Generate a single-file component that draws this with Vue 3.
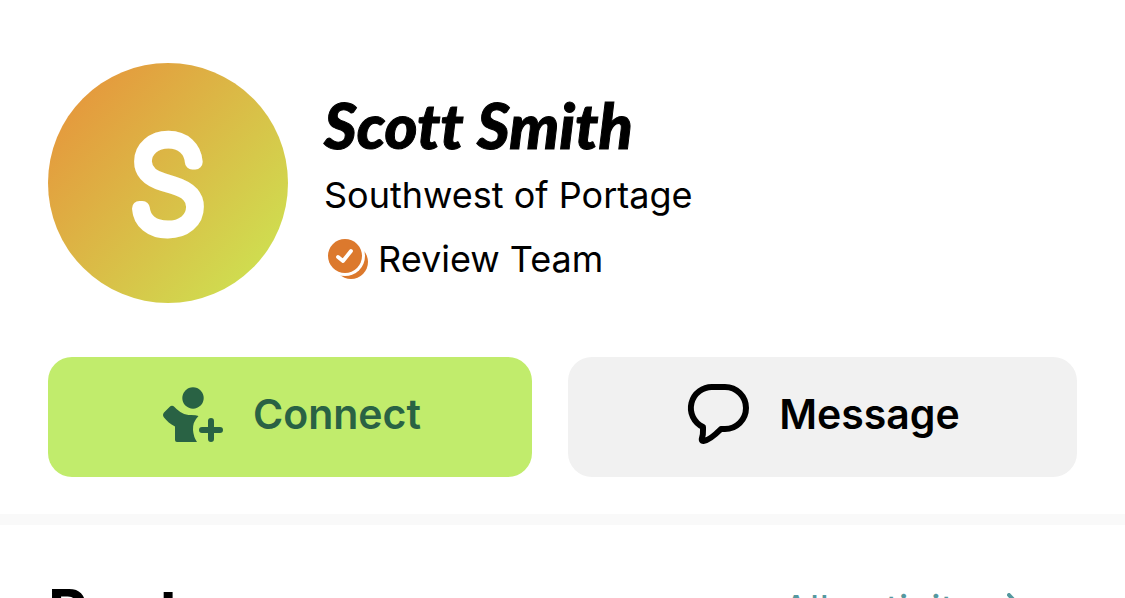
<template>
  <div class="page">
    <section class="profile">
      <div class="summary">
        <svg class="avatar" viewBox="0 0 240 240" role="img" :aria-label="user.name">
          <defs>
            <linearGradient id="avatar-fill" x1="0.1" y1="0.15" x2="0.9" y2="0.85">
              <stop offset="0" stop-color="#e5993d" />
              <stop offset="1" stop-color="#cfde50" />
            </linearGradient>
          </defs>
          <circle cx="120" cy="120" r="120" fill="url(#avatar-fill)" />
          <text class="initial" x="120" y="167" text-anchor="middle">{{ initial }}</text>
        </svg>
        <div class="details">
          <h1 class="name">{{ user.name }}</h1>
          <p class="line">{{ user.area }}</p>
          <p class="line role">
            <svg class="badge" viewBox="0 0 42 42" aria-hidden="true">
              <circle cx="24" cy="24" r="17" fill="#dc792d" />
              <circle cx="18" cy="18" r="20" fill="#fff" />
              <circle cx="18" cy="18" r="17" fill="#dc792d" />
              <path
                d="M11 19l5 4 8-10"
                fill="none"
                stroke="#fff"
                stroke-width="3.8"
                stroke-linecap="round"
                stroke-linejoin="round"
              />
            </svg>
            <span>{{ user.role }}</span>
          </p>
        </div>
      </div>

      <div class="actions">
        <button type="button" class="btn connect" @click="connected = !connected">
          <svg class="icon" viewBox="0 0 60 60" aria-hidden="true">
            <circle cx="30" cy="14" r="10.7" fill="currentColor" />
            <path
              d="M6.5 23Q9 20.500 11.500 23C17 28.500 21 31 28 31Q33 31 35.500 32Q29.500 38 30 46Q30.500 53 34 58H14Q12 58 12 56V42.500C7 40 4 37 1 33.500Q-1 31 1 28.500Z"
              fill="currentColor"
            />
            <path
              d="M48 37V55M39 46H57"
              fill="none"
              stroke="currentColor"
              stroke-width="6"
              stroke-linecap="round"
            />
          </svg>
          <span>Connect</span>
        </button>
        <button type="button" class="btn message">
          <svg class="icon" viewBox="0 0 60 60" aria-hidden="true">
            <path
              d="M24 3H36A21 21 0 0 1 36 45H32C26 51 20 56.500 14.500 57C12.500 57 12.500 55.500 13 54C14.500 50 14 46 14 43A21 21 0 0 1 24 3Z"
              fill="none"
              stroke="currentColor"
              stroke-width="6"
              stroke-linejoin="round"
            />
          </svg>
          <span>Message</span>
        </button>
      </div>
    </section>

    <section class="posts">
      <h2 class="posts-title">Posts</h2>
      <a class="all" href="#activity">
        <span>All activity</span>
        <svg class="chevron" viewBox="0 0 18 34" aria-hidden="true">
          <path
            d="M2 2l14 15-14 15"
            fill="none"
            stroke="currentColor"
            stroke-width="4"
            stroke-linecap="round"
            stroke-linejoin="round"
          />
        </svg>
      </a>
    </section>
  </div>
</template>

<script setup>
import { ref, computed } from "vue";

const user = {
  name: "Scott Smith",
  area: "Southwest of Portage",
  role: "Review Team",
};

const connected = ref(false);
const initial = computed(() => user.name.charAt(0));
</script>

<style>
body {
  margin: 0;
  background: #fff;
}
</style>

<style scoped>
* {
  box-sizing: border-box;
}

.page {
  height: 100vh;
  overflow: hidden;
  background: #fff;
  color: #000;
  font-family: Inter, "Liberation Sans", sans-serif;
}

.profile {
  padding: 63px 48px 37px;
  border-bottom: 11px solid #f9f9f9;
}

.summary {
  display: flex;
  align-items: center;
  gap: 36px;
}

.avatar {
  flex: none;
  width: 240px;
  height: 240px;
}

.initial {
  font-size: 124px;
  font-weight: 100;
  fill: #fff;
  stroke: #fff;
  stroke-width: 15px;
  stroke-linejoin: round;
}

.details {
  padding-top: 14px;
}

.name {
  margin: 0 0 2px;
  font-family: "Lato Black", Lato, sans-serif;
  font-size: 63px;
  font-weight: 900;
  font-style: italic;
  font-variant-ligatures: none;
  line-height: 72px;
  -webkit-text-stroke: 1px #000;
}

.line {
  margin: 0;
  font-size: 36px;
  line-height: 64px;
}

.role {
  display: flex;
  align-items: center;
  gap: 9px;
}

.badge {
  width: 42px;
  height: 42px;
  margin-left: 3px;
}

.actions {
  display: flex;
  gap: 36px;
  margin-top: 54px;
}

.btn {
  display: flex;
  align-items: center;
  justify-content: center;
  gap: 30px;
  height: 120px;
  padding: 0 0 6px 4px;
  border: 0;
  border-radius: 24px;
  font-family: inherit;
  font-size: 41px;
  font-weight: 600;
  cursor: pointer;
}

.connect {
  flex: 19;
  background: #c1ec6c;
  color: #296244;
}

.message {
  flex: 20;
  background: #f1f1f1;
  color: #000;
}

.icon {
  flex: none;
  width: 60px;
  height: 60px;
  overflow: visible;
}

.posts {
  display: flex;
  align-items: center;
  justify-content: space-between;
  padding: 50px 100px 48px 48px;
}

.posts-title {
  margin: 0;
  font-size: 61px;
  font-weight: 700;
  line-height: 72px;
}

.all {
  display: flex;
  align-items: center;
  gap: 30px;
  padding-bottom: 2px;
  color: #55989f;
  font-size: 40px;
  line-height: 48px;
  text-decoration: none;
}

.chevron {
  width: 18px;
  height: 34px;
}
</style>
